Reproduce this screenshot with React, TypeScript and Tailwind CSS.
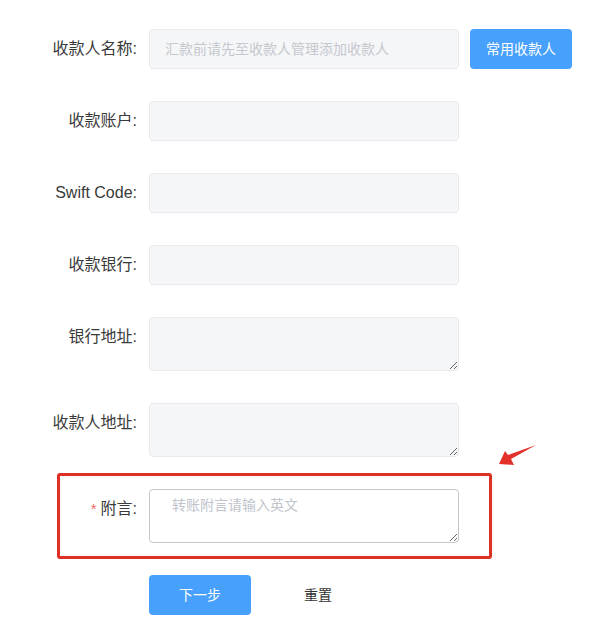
import React from "react";

const font = { fontFamily: '"Liberation Sans", "Noto Sans CJK SC", sans-serif' };

function Label({ children, w = "w-[149px]", required = false }: { children: React.ReactNode; w?: string; required?: boolean }) {
  return (
    <div className={`${w} shrink-0 pr-[12px] text-right text-[16px] leading-[40px] text-[#3a3a3a]`}>
      {required && <span className="mr-[4px] text-[15px] text-[#f56c6c]">*</span>}
      {children}
    </div>
  );
}

export default function App() {
  return (
    <div className="relative w-[597px] h-[629px] bg-white" style={font}>
      <div className="flex flex-col pt-[29px]">
        {/* Row 1 */}
        <div className="flex items-start">
          <Label>收款人名称:</Label>
          <input
            readOnly
            placeholder="汇款前请先至收款人管理添加收款人"
            className="h-[40px] w-[310px] rounded-[4px] border border-[#e8eaee] bg-[#f5f6f8] px-[15px] text-[14px] text-[#606266] outline-none placeholder:text-[#c5c8ce]"
            style={font}
          />
          <button className="ml-[11px] h-[40px] w-[102px] rounded-[4px] bg-[#46a0fc] text-[14px] text-white">
            常用收款人
          </button>
        </div>

        {/* Row 2 */}
        <div className="mt-[32px] flex items-start">
          <Label>收款账户:</Label>
          <input className="h-[40px] w-[310px] rounded-[4px] border border-[#e8eaee] bg-[#f5f6f8] px-[15px] text-[14px] outline-none" />
        </div>

        {/* Row 3 */}
        <div className="mt-[32px] flex items-start">
          <Label>Swift Code:</Label>
          <input className="h-[40px] w-[310px] rounded-[4px] border border-[#e8eaee] bg-[#f5f6f8] px-[15px] text-[14px] outline-none" />
        </div>

        {/* Row 4 */}
        <div className="mt-[32px] flex items-start">
          <Label>收款银行:</Label>
          <input className="h-[40px] w-[310px] rounded-[4px] border border-[#e8eaee] bg-[#f5f6f8] px-[15px] text-[14px] outline-none" />
        </div>

        {/* Row 5 */}
        <div className="mt-[32px] flex items-start">
          <Label>银行地址:</Label>
          <textarea className="block h-[54px] w-[310px] rounded-[4px] border border-[#e8eaee] bg-[#f5f6f8] px-[15px] py-[5px] text-[14px] leading-[21px] outline-none" />
        </div>

        {/* Row 6 */}
        <div className="mt-[32px] flex items-start">
          <Label>收款人地址:</Label>
          <textarea className="block h-[54px] w-[310px] rounded-[4px] border border-[#e8eaee] bg-[#f5f6f8] px-[15px] py-[5px] text-[14px] leading-[21px] outline-none" />
        </div>

        {/* Highlighted row */}
        <div className="mt-[16px] ml-[57px] w-[435px] rounded-[3px] border-[3px] border-[#dc2f26] pt-[13px] pb-[13px]">
          <div className="flex items-start">
            <Label w="w-[89px]" required>
              附言:
            </Label>
            <textarea
              placeholder="转账附言请输入英文"
              className="block h-[54px] w-[310px] rounded-[4px] border border-[#c4c6cb] bg-white pl-[22px] pr-[15px] py-[5px] text-[14px] leading-[21px] outline-none placeholder:text-[#c0c4cc]"
              style={font}
            />
          </div>
        </div>

        {/* Buttons */}
        <div className="mt-[16px] flex items-center pl-[149px]">
          <button className="h-[40px] w-[102px] rounded-[4px] bg-[#46a0fc] text-[14px] text-white">下一步</button>
          <button className="ml-[53px] text-[14px] text-[#333333]">重置</button>
        </div>
      </div>

      {/* Annotation arrow */}
      <svg className="absolute left-0 top-0 pointer-events-none" width="597" height="629" viewBox="0 0 597 629">
        <polygon
          points="499,464 505,451 508,455 536,445 511,459 514,465"
          fill="#e3302a"
        />
      </svg>
    </div>
  );
}
